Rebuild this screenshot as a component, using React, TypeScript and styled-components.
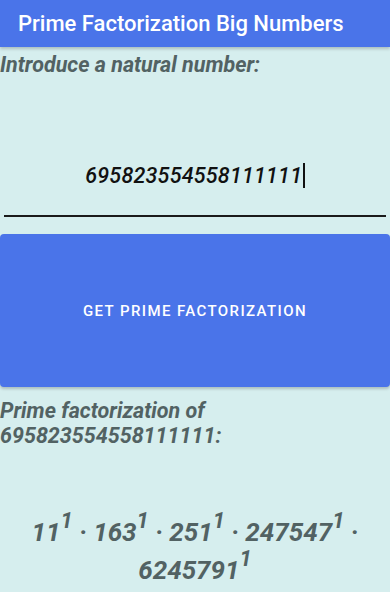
import React from 'react';
import styled, { createGlobalStyle } from 'styled-components';

const GlobalStyle = createGlobalStyle`
  html, body {
    margin: 0;
    padding: 0;
    background: #d6eeee;
    font-family: Roboto, "Noto Sans", sans-serif;
  }
  * { box-sizing: border-box; }
`;

const Page = styled.div`
  width: 390px;
  height: 592px;
  overflow: hidden;
  background: #d6eeee;
  display: flex;
  flex-direction: column;
  & > * { flex-shrink: 0; }
`;

const AppBar = styled.header`
  height: 47px;
  background: #4a74e9;
  color: #fff;
  display: flex;
  align-items: center;
  padding-left: 18px;
  font-size: 22px;
  font-weight: 500;
  box-shadow: 0 2px 3px rgba(0, 0, 0, 0.2);
`;

const Label = styled.div`
  color: #526263;
  font-size: 21.5px;
  font-weight: 700;
  font-style: italic;
  line-height: 25px;
`;

const Form = styled.div`
  padding-top: 5px;
`;

const Field = styled.div`
  margin: 86px 4px 0 4px;
  border-bottom: 2px solid #1a1a1a;
  height: 54px;
  display: flex;
  justify-content: center;
  align-items: flex-start;
`;

const InputText = styled.span`
  font-size: 21.5px;
  font-weight: 500;
  font-style: italic;
  color: #111;
  letter-spacing: 0.2px;
  line-height: 25px;
`;

const Caret = styled.span`
  display: inline-block;
  width: 1.5px;
  height: 25px;
  background: #111;
  vertical-align: top;
  margin-left: 1px;
`;

const ActionButton = styled.button`
  margin-top: 17px;
  width: 390px;
  height: 153px;
  border: none;
  border-radius: 4px;
  background: #4a74e9;
  color: #fff;
  font-family: Roboto, sans-serif;
  font-size: 15px;
  font-weight: 500;
  letter-spacing: 1.4px;
  box-shadow: 0 2px 3px rgba(0, 0, 0, 0.2);
`;

const Result = styled.div`
  padding-top: 11px;
`;

const Factors = styled.div`
  margin-top: 65px;
  text-align: center;
  color: #526263;
  font-size: 26px;
  font-weight: 700;
  font-style: italic;
  line-height: 38px;
  padding: 0 28px;
`;

const Exp = styled.sup`
  font-size: 22px;
  line-height: 0;
  vertical-align: 13px;
`;

const factors = ['11', '163', '251', '247547', '6245791'];

export default function App() {
  return (
    <>
      <GlobalStyle />
      <Page>
        <AppBar>Prime Factorization Big Numbers</AppBar>
        <Form>
          <Label>Introduce a natural number:</Label>
          <Field>
            <InputText>
              695823554558111111
              <Caret />
            </InputText>
          </Field>
        </Form>
        <ActionButton>GET PRIME FACTORIZATION</ActionButton>
        <Result>
          <Label>
            Prime factorization of
            <br />
            695823554558111111:
          </Label>
          <Factors>
            {factors.map((f, i) => (
              <React.Fragment key={f}>
                {f}
                <Exp>1</Exp>
                {i < factors.length - 1 ? ' · ' : ''}
              </React.Fragment>
            ))}
          </Factors>
        </Result>
      </Page>
    </>
  );
}
